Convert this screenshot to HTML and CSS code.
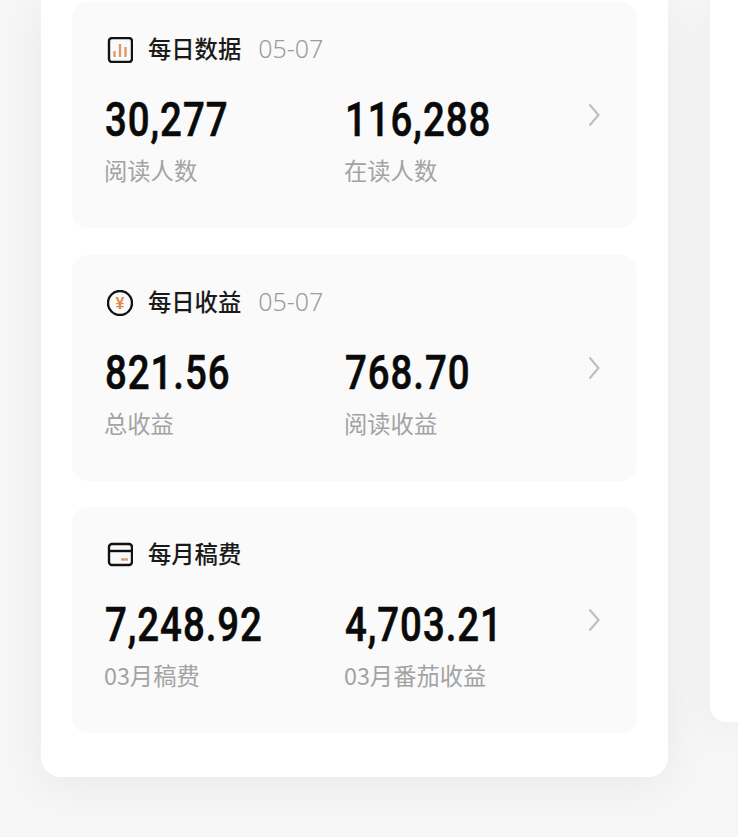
FILE: index.html
```html
<!DOCTYPE html>
<html lang="zh-CN">
<head>
  <meta charset="UTF-8">
  <title>每日数据</title>
  <link rel="stylesheet" href="styles.css">
</head>
<body>

  <div class="page">
    <main class="panel">

      <section class="card">
        <div class="card-head">
          <svg class="icon" viewBox="0 0 26 26">
            <rect x="2" y="1" width="23" height="24" rx="3" fill="none" stroke="#111" stroke-width="2.400"/>
            <path d="M7.500 20v-6M13 20V7M18.500 20v-10" fill="none" stroke="#e09a66" stroke-width="2.400"/>
          </svg>
          <h3>每日数据</h3>
          <span class="date">05-07</span>
        </div>
        <div class="card-body">
          <div class="stat">
            <div class="num">30,277</div>
            <div class="label">阅读人数</div>
          </div>
          <div class="stat">
            <div class="num">116,288</div>
            <div class="label">在读人数</div>
          </div>
          <svg class="arrow" viewBox="0 0 12 24">
            <path d="M1.500 1.500L10.500 12L1.500 22.500" fill="none" stroke="#bdbdbd" stroke-width="2"/>
          </svg>
        </div>
      </section>

      <section class="card">
        <div class="card-head">
          <svg class="icon" viewBox="0 0 26 26">
            <circle cx="13" cy="13" r="12" fill="none" stroke="#111" stroke-width="2.400"/>
            <text class="yen" x="13" y="18.500" text-anchor="middle">¥</text>
          </svg>
          <h3>每日收益</h3>
          <span class="date">05-07</span>
        </div>
        <div class="card-body">
          <div class="stat">
            <div class="num">821.56</div>
            <div class="label">总收益</div>
          </div>
          <div class="stat">
            <div class="num">768.70</div>
            <div class="label">阅读收益</div>
          </div>
          <svg class="arrow" viewBox="0 0 12 24">
            <path d="M1.500 1.500L10.500 12L1.500 22.500" fill="none" stroke="#bdbdbd" stroke-width="2"/>
          </svg>
        </div>
      </section>

      <section class="card">
        <div class="card-head">
          <svg class="icon" viewBox="0 0 26 26">
            <rect x="2" y="2" width="23" height="21" rx="3" fill="none" stroke="#111" stroke-width="2.400"/>
            <path d="M2 9h23" stroke="#111" stroke-width="2.400"/>
            <path d="M14 17.500h7" stroke="#e09a66" stroke-width="2.400"/>
          </svg>
          <h3>每月稿费</h3>
        </div>
        <div class="card-body">
          <div class="stat">
            <div class="num">7,248.92</div>
            <div class="label">03月稿费</div>
          </div>
          <div class="stat">
            <div class="num">4,703.21</div>
            <div class="label">03月番茄收益</div>
          </div>
          <svg class="arrow" viewBox="0 0 12 24">
            <path d="M1.500 1.500L10.500 12L1.500 22.500" fill="none" stroke="#bdbdbd" stroke-width="2"/>
          </svg>
        </div>
      </section>

    </main>
    <aside class="side"></aside>
  </div>

</body>
</html>
```

FILE: styles.css
```css
html, body {
  margin: 0;
  height: 100%;
}
body {
  font-family: "Noto Sans CJK SC", "Noto Sans", sans-serif;
  background: #f6f6f6;
  overflow: hidden;
}
.page {
  display: flex;
  align-items: flex-start;
  gap: 42px;
  padding-left: 41px;
  height: 837px;
}
.panel {
  width: 627px;
  flex-shrink: 0;
  box-sizing: border-box;
  padding: 2px 31px 44px;
  display: flex;
  flex-direction: column;
  gap: 26.500px;
  background: white;
  border-radius: 0 0 20px 20px;
  box-shadow: 0 6px 44px rgba(0,0,0,0.06);
}
.side {
  flex: 1;
  height: 722px;
  background: white;
  border-radius: 0 0 0 16px;
  box-shadow: 0 6px 44px rgba(0,0,0,0.06);
}
.card {
  height: 226px;
  box-sizing: border-box;
  padding: 34px 0 0 35px;
  background: #fafafa;
  border-radius: 16px;
}
.card-head {
  display: flex;
  align-items: center;
  height: 28px;
}
.icon {
  width: 26px;
  height: 26px;
  margin-right: 15px;
}
.yen {
  font-family: "Liberation Sans", sans-serif;
  font-size: 16px;
  font-weight: bold;
  fill: #e08a4a;
}
h3 {
  margin: -4px 0 0;
  font-size: 23.300px;
  font-weight: 500;
  color: #1a1a1a;
}
.date {
  margin: -4px 0 0 17px;
  font-family: "Noto Sans", sans-serif;
  font-size: 25px;
  font-weight: 300;
  color: #9c9c9c;
}
.card-body {
  display: flex;
  margin-top: 28px;
}
.stat {
  width: 240px;
  margin-left: -2px;
  margin-right: 2px;
}
.num {
  font-family: "Roboto", sans-serif;
  font-size: 48px;
  font-weight: 500;
  letter-spacing: 1.200px;
  -webkit-text-stroke: 0.6px #0a0a0a;
  line-height: 56px;
  color: #0a0a0a;
  transform: scaleX(0.8);
  transform-origin: left;
}
.label {
  margin: 6px 0 0 -1px;
  font-size: 23.300px;
  line-height: 32px;
  color: #a3a3a3;
}
.arrow {
  width: 12px;
  height: 24px;
  margin: 11px 0 0 1px;
}
```
